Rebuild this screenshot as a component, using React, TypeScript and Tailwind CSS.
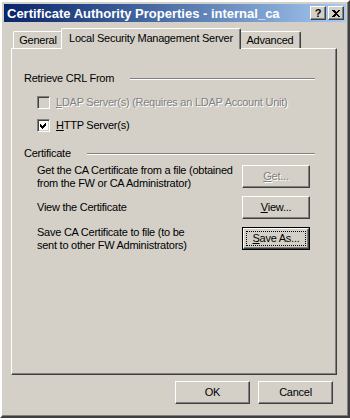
import React from "react";

const raised =
  "border border-t-white border-l-white border-r-[#404040] border-b-[#404040] shadow-[inset_-1px_-1px_0_#808080]";
const disabledText = "text-[#808080] [text-shadow:1px_1px_0_#ffffff]";

function U({ children }: { children: React.ReactNode }) {
  return <span className="underline underline-offset-[1px]">{children}</span>;
}

function Button({
  children,
  disabled,
  isDefault,
  className = "",
}: {
  children: React.ReactNode;
  disabled?: boolean;
  isDefault?: boolean;
  className?: string;
}) {
  if (isDefault) {
    return (
      <div className={`border border-black ${className}`}>
        <div className={`${raised} h-full w-full p-[2px]`}>
          <div className="flex h-full w-full items-center justify-center outline outline-1 outline-dotted outline-black -outline-offset-1">
            {children}
          </div>
        </div>
      </div>
    );
  }
  return (
    <div className={`${raised} flex items-center justify-center ${disabled ? disabledText : ""} ${className}`}>
      {children}
    </div>
  );
}

function Checkbox({ checked, disabled }: { checked?: boolean; disabled?: boolean }) {
  return (
    <div
      className={`h-[13px] w-[13px] shrink-0 border border-t-[#808080] border-l-[#808080] border-r-white border-b-white shadow-[inset_1px_1px_0_#404040,inset_-1px_-1px_0_#d4d0c8] ${
        disabled ? "bg-[#d4d0c8]" : "bg-white"
      }`}
    >
      {checked && (
        <svg width="11" height="11" viewBox="0 0 11 11" shapeRendering="crispEdges">
          <path d="M2 4 L4 6 L8 2 L8 5 L4 9 L2 7 Z" fill="#000" />
        </svg>
      )}
    </div>
  );
}

function GroupTitle({ label }: { label: string }) {
  return (
    <div className="flex h-[13px] items-center pl-[12px] pr-[21px]">
      <span className="whitespace-nowrap">{label}</span>
      <div className="ml-[16px] h-[2px] flex-1 border-t border-t-[#808080] border-b border-b-white" />
    </div>
  );
}

export default function App() {
  return (
    <div
      className="h-[418px] w-[350px] overflow-hidden border-2 border-t-white border-l-white border-r-[#404040] border-b-[#404040] bg-[#d4d0c8] p-[2px] text-[11px] leading-[13px] tracking-[-0.25px] text-black shadow-[inset_-1px_-1px_0_#808080]"
      style={{ fontFamily: "Tahoma, 'Liberation Sans', Arial, sans-serif" }}
    >
      {/* title bar */}
      <div className="flex h-[18px] items-center bg-gradient-to-r from-[#0a246a] to-[#a6caf0] pl-[3px] pr-[2px] tracking-normal">
        <span className="flex-1 whitespace-nowrap text-[13px] font-bold text-white">
          Certificate Authority Properties - internal_ca
        </span>
        <div className={`${raised} flex h-[14px] w-[16px] items-center justify-center bg-[#d4d0c8] text-[11px] font-bold leading-none`}>
          ?
        </div>
        <div className={`${raised} ml-[2px] flex h-[14px] w-[16px] items-center justify-center bg-[#d4d0c8]`}>
          <svg width="8" height="7" viewBox="0 0 8 7" shapeRendering="crispEdges">
            <path d="M0 0h2l2 2 2-2h2L5 3.5 8 7H6L4 5 2 7H0l3-3.5z" fill="#000" />
          </svg>
        </div>
      </div>

      {/* tabs */}
      <div className="ml-[7px] mt-[6px] w-[326px]">
        <div className="flex h-[20px] items-end pl-[2px]">
          <div className="flex h-[17px] w-[50px] items-center justify-center rounded-t-[2px] border border-b-0 border-t-white border-l-white border-r-[#404040] shadow-[inset_-1px_0_0_#808080]">
            General
          </div>
          <div className="relative z-10 -mx-[2px] -mb-[1px] flex h-[21px] w-[180px] items-start justify-center rounded-t-[2px] border border-b-0 border-t-white border-l-white border-r-[#404040] bg-[#d4d0c8] pt-[3px] shadow-[inset_-1px_0_0_#808080]">
            Local Security Management Server
          </div>
          <div className="flex h-[17px] w-[62px] items-center justify-center rounded-t-[2px] border border-b-0 border-t-white border-l-white border-r-[#404040] shadow-[inset_-1px_0_0_#808080]">
            Advanced
          </div>
        </div>

        {/* panel */}
        <div className={`${raised} h-[327px] pt-[23px]`}>
          <GroupTitle label="Retrieve CRL From" />

          <div className="mt-[11px] flex items-center pl-[25px]">
            <Checkbox disabled />
            <span className={`ml-[6px] whitespace-nowrap ${disabledText}`}>
              <U>L</U>DAP Server(s) (Requires an LDAP Account Unit)
            </span>
          </div>
          <div className="mt-[10px] flex items-center pl-[25px]">
            <Checkbox checked />
            <span className="ml-[6px] whitespace-nowrap">
              <U>H</U>TTP Server(s)
            </span>
          </div>

          <div className="mt-[15px]">
            <GroupTitle label="Certificate" />
          </div>

          <div className="mt-[3px] flex flex-col gap-[6px] pl-[25px]">
            <div className="flex h-[27px] items-center">
              <span className="w-[205px] whitespace-nowrap">
                Get the CA Certificate from a file (obtained
                <br />
                from the FW or CA Administrator)
              </span>
              <Button disabled className="h-[23px] w-[68px]">
                <U>G</U>et...
              </Button>
            </div>
            <div className="flex h-[23px] items-center">
              <span className="w-[205px] whitespace-nowrap">View the Certificate</span>
              <Button className="h-[23px] w-[68px]">
                <U>V</U>iew...
              </Button>
            </div>
            <div className="flex h-[27px] items-center">
              <span className="w-[205px] whitespace-nowrap">
                Save CA Certificate to file (to be
                <br />
                sent to other FW Administrators)
              </span>
              <Button isDefault className="h-[23px] w-[68px]">
                <U>S</U>ave As...
              </Button>
            </div>
          </div>
        </div>
      </div>

      {/* footer buttons */}
      <div className="mt-[6px] flex justify-end gap-[8px] pr-[13px]">
        <Button className="h-[23px] w-[75px]">OK</Button>
        <Button className="h-[23px] w-[75px]">Cancel</Button>
      </div>
    </div>
  );
}
